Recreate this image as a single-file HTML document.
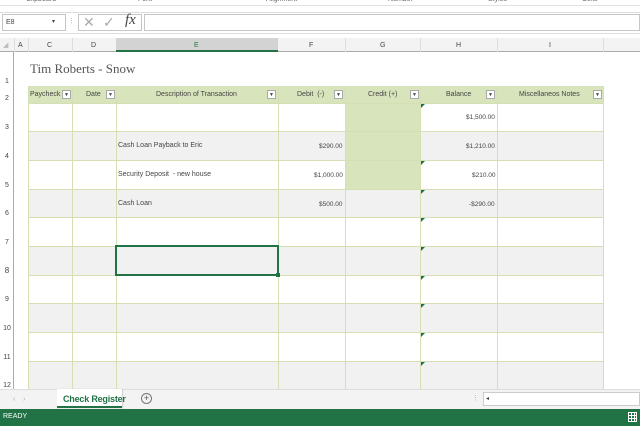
<!DOCTYPE html><html><head><style>
*{margin:0;padding:0;box-sizing:border-box}
body{width:640px;height:426px;overflow:hidden;background:#fff;font-family:"Liberation Sans",sans-serif;position:relative}
.a{position:absolute}
.t{font-size:7px;color:#444;white-space:nowrap}
.vl{position:absolute;width:1px;background:#d4e0b4}
.hl{position:absolute;height:1px;background:#d4e0b4}
.dd{position:absolute;width:9px;height:9px;border:1px solid #aaa;background:#fff;font-size:5px;color:#444;text-align:center;line-height:8px}
.rn{position:absolute;left:0;width:14px;text-align:center;font-size:7px;color:#444}
.tri{position:absolute;width:0;height:0;border-top:4px solid #1e7145;border-right:4px solid transparent}
</style></head><body>
<!-- ribbon group labels -->
<div class="a" style="left:0;top:0;width:640px;height:6px;background:#fff;border-bottom:1px solid #e2e2e2"></div>
<div class="a t" style="left:26px;top:-4px;color:#666">Clipboard</div>
<div class="a t" style="left:138px;top:-4px;color:#666">Font</div>
<div class="a t" style="left:266px;top:-4px;color:#666">Alignment</div>
<div class="a t" style="left:388px;top:-4px;color:#666">Number</div>
<div class="a t" style="left:488px;top:-4px;color:#666">Styles</div>
<div class="a t" style="left:582px;top:-4px;color:#666">Cells</div>
<div class="a" style="left:0;top:12px;width:640px;height:1px;background:#ddd"></div>
<!-- formula bar -->
<div class="a" style="left:2px;top:14px;width:64px;height:17px;border:1px solid #c6c6c6;background:#fff"></div>
<div class="a t" style="left:6px;top:19px;font-size:7px">E8</div>
<div class="a t" style="left:52px;top:18px;font-size:6px">▾</div>
<div class="a t" style="left:68px;top:17px;color:#aaa">⋮</div>
<div class="a" style="left:78px;top:14px;width:64px;height:17px;border:1px solid #c6c6c6;background:#fff"></div>
<div class="a" style="left:83px;top:14px;font-size:14px;color:#aaa">✕</div>
<div class="a" style="left:103px;top:14px;font-size:14px;color:#aaa">✓</div>
<div class="a" style="left:125px;top:12px;font-size:15px;color:#444;font-family:'Liberation Serif',serif;font-style:italic">fx</div>
<div class="a" style="left:144px;top:14px;width:496px;height:17px;border:1px solid #c6c6c6;background:#fff"></div>
<div class="a" style="left:0;top:33px;width:640px;height:1px;background:#ddd"></div>
<!-- column headers -->
<div class="a" style="left:0;top:38px;width:640px;height:14px;background:#f3f3f3;border-bottom:1px solid #ababab"></div>
<div class="a" style="left:116px;top:38px;width:162px;height:14px;background:#d3d3d3;border-bottom:2px solid #217346"></div>
<div class="a t" style="left:3px;top:41px;color:#bbb">◢</div>
<div class="a t" style="left:18px;top:42px">A</div>
<div class="a t" style="left:47px;top:42px">C</div>
<div class="a t" style="left:91px;top:42px">D</div>
<div class="a t" style="left:194px;top:42px;color:#217346">E</div>
<div class="a t" style="left:309px;top:42px">F</div>
<div class="a t" style="left:380px;top:42px">G</div>
<div class="a t" style="left:456px;top:42px">H</div>
<div class="a t" style="left:549px;top:42px">I</div>
<div class="a" style="left:14px;top:38px;width:1px;height:14px;background:#ddd"></div>
<div class="a" style="left:28px;top:38px;width:1px;height:14px;background:#ddd"></div>
<div class="a" style="left:72px;top:38px;width:1px;height:14px;background:#ddd"></div>
<div class="a" style="left:345px;top:38px;width:1px;height:14px;background:#ddd"></div>
<div class="a" style="left:420px;top:38px;width:1px;height:14px;background:#ddd"></div>
<div class="a" style="left:497px;top:38px;width:1px;height:14px;background:#ddd"></div>
<div class="a" style="left:603px;top:38px;width:1px;height:14px;background:#ddd"></div>
<!-- row header column -->
<div class="a" style="left:0;top:52px;width:14px;height:337px;background:#fff;border-right:1px solid #ababab"></div>
<!-- title -->
<div class="a" style="left:30px;top:61px;font-family:'Liberation Serif',serif;font-size:13px;color:#555">Tim Roberts - Snow</div>
<!-- header row -->
<div class="a" style="left:28px;top:86px;width:575px;height:17px;background:#d8e4bc"></div>
<div class="a t" style="left:30px;top:91px">Paycheck</div><div class="dd" style="left:62px;top:90px">▼</div>
<div class="a t" style="left:86px;top:91px">Date</div><div class="dd" style="left:106px;top:90px">▼</div>
<div class="a t" style="left:156px;top:91px">Description of Transaction</div><div class="dd" style="left:267px;top:90px">▼</div>
<div class="a t" style="left:297px;top:91px">Debit&nbsp; (-)</div><div class="dd" style="left:334px;top:90px">▼</div>
<div class="a t" style="left:368px;top:91px">Credit (+)</div><div class="dd" style="left:410px;top:90px">▼</div>
<div class="a t" style="left:446px;top:91px">Balance</div><div class="dd" style="left:486px;top:90px">▼</div>
<div class="a t" style="left:519px;top:91px">Miscellaneos Notes</div><div class="dd" style="left:593px;top:90px">▼</div>
<!-- data rows bg -->
<div class="a" style="left:28px;top:131px;width:575px;height:29px;background:#f1f1f1"></div>
<div class="a" style="left:28px;top:189px;width:575px;height:28px;background:#f1f1f1"></div>
<div class="a" style="left:28px;top:246px;width:575px;height:29px;background:#f1f1f1"></div>
<div class="a" style="left:28px;top:303px;width:575px;height:29px;background:#f1f1f1"></div>
<div class="a" style="left:28px;top:361px;width:575px;height:28px;background:#f1f1f1"></div>
<div class="a" style="left:345px;top:103px;width:75px;height:86px;background:#d8e4bc"></div>
<!-- grid lines -->
<div class="vl" style="left:28px;top:86px;height:303px"></div>
<div class="vl" style="left:72px;top:86px;height:303px"></div>
<div class="vl" style="left:116px;top:86px;height:303px"></div>
<div class="vl" style="left:278px;top:86px;height:303px"></div>
<div class="vl" style="left:345px;top:86px;height:303px"></div>
<div class="vl" style="left:420px;top:86px;height:303px"></div>
<div class="vl" style="left:497px;top:86px;height:303px"></div>
<div class="vl" style="left:603px;top:86px;height:303px"></div>
<div class="hl" style="left:28px;top:103px;width:576px"></div>
<div class="hl" style="left:28px;top:131px;width:576px"></div>
<div class="hl" style="left:28px;top:160px;width:576px"></div>
<div class="hl" style="left:28px;top:189px;width:576px"></div>
<div class="hl" style="left:28px;top:217px;width:576px"></div>
<div class="hl" style="left:28px;top:246px;width:576px"></div>
<div class="hl" style="left:28px;top:275px;width:576px"></div>
<div class="hl" style="left:28px;top:303px;width:576px"></div>
<div class="hl" style="left:28px;top:332px;width:576px"></div>
<div class="hl" style="left:28px;top:361px;width:576px"></div>
<div class="hl" style="left:28px;top:389px;width:576px"></div>
<!-- triangles -->
<div class="tri" style="left:421px;top:104px"></div>
<div class="tri" style="left:421px;top:161px"></div>
<div class="tri" style="left:421px;top:190px"></div>
<div class="tri" style="left:421px;top:218px"></div>
<div class="tri" style="left:421px;top:247px"></div>
<div class="tri" style="left:421px;top:276px"></div>
<div class="tri" style="left:421px;top:304px"></div>
<div class="tri" style="left:421px;top:333px"></div>
<div class="tri" style="left:421px;top:362px"></div>
<!-- data text -->
<div class="a t" style="left:466px;top:114px;font-size:6.5px">$1,500.00</div>
<div class="a t" style="left:118px;top:142px">Cash Loan Payback to Eric</div>
<div class="a t" style="left:319px;top:143px;font-size:6.5px">$290.00</div>
<div class="a t" style="left:466px;top:143px;font-size:6.5px">$1,210.00</div>
<div class="a t" style="left:118px;top:171px">Security Deposit&nbsp; - new house</div>
<div class="a t" style="left:314px;top:172px;font-size:6.5px">$1,000.00</div>
<div class="a t" style="left:472px;top:172px;font-size:6.5px">$210.00</div>
<div class="a t" style="left:118px;top:200px">Cash Loan</div>
<div class="a t" style="left:319px;top:201px;font-size:6.5px">$500.00</div>
<div class="a t" style="left:469px;top:201px;font-size:6.5px">-$290.00</div>
<!-- selection -->
<div class="a" style="left:115px;top:245px;width:164px;height:31px;border:2px solid #217346"></div>
<div class="a" style="left:276px;top:273px;width:4px;height:4px;background:#217346"></div>
<!-- row numbers -->
<div class="rn" style="top:78px">1</div><div class="rn" style="top:95px">2</div>
<div class="rn" style="top:124px">3</div><div class="rn" style="top:153px">4</div>
<div class="rn" style="top:182px">5</div><div class="rn" style="top:210px">6</div>
<div class="rn" style="top:239px">7</div><div class="rn" style="top:266px;font-size:8px">8</div>
<div class="rn" style="top:296px">9</div><div class="rn" style="top:325px">10</div>
<div class="rn" style="top:354px">11</div><div class="rn" style="top:382px">12</div>
<!-- tab bar -->
<div class="a" style="left:0;top:389px;width:640px;height:20px;background:#f3f3f3;border-top:1px solid #ddd"></div>
<div class="a t" style="left:13px;top:396px;color:#aaa">‹&nbsp;&nbsp;&nbsp;&nbsp;›</div>
<div class="a" style="left:57px;top:389px;width:65px;height:19px;background:#fff;border-bottom:2px solid #217346;box-shadow:1px 0 1px #ccc"></div>
<div class="a" style="left:63px;top:394px;font-size:9px;font-weight:bold;color:#217346;letter-spacing:-0.2px">Check Register</div>
<div class="a" style="left:141px;top:393px;width:11px;height:11px;border:1px solid #777;border-radius:50%;font-size:9px;line-height:9px;text-align:center;color:#555">+</div>
<div class="a t" style="left:472px;top:394px;color:#aaa">⋮</div>
<div class="a" style="left:483px;top:392px;width:157px;height:14px;background:#fff;border:1px solid #ccc"></div>
<div class="a t" style="left:486px;top:395px;font-size:6px">◂</div>
<!-- status bar -->
<div class="a" style="left:0;top:409px;width:640px;height:17px;background:#217346"></div>
<div class="a" style="left:3px;top:413px;font-size:7px;color:#fff">READY</div>
<div class="a" style="left:628px;top:412px;width:9px;height:10px;border:1px solid #fff;background:repeating-linear-gradient(90deg,transparent 0 2px,#fff 2px 3px),repeating-linear-gradient(0deg,transparent 0 2px,#fff 2px 3px)"></div>
</body></html>
